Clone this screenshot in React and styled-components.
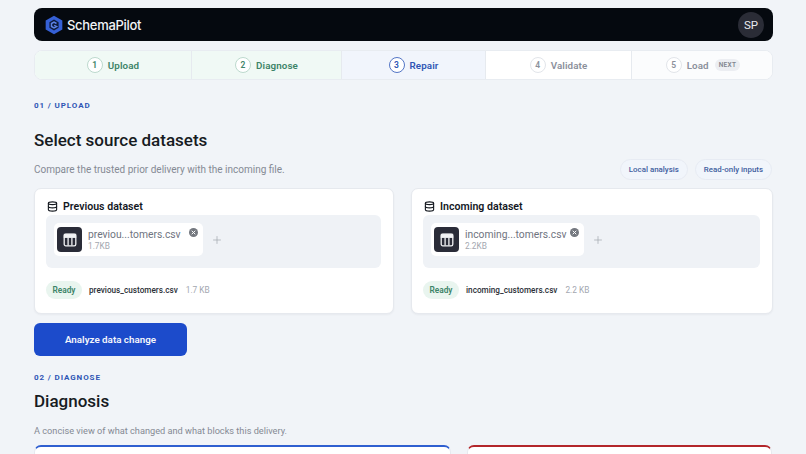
import styled, { createGlobalStyle } from 'styled-components';
import { Database, Plus } from 'lucide-react';

const GlobalStyle = createGlobalStyle`
  html, body {
    margin: 0;
    height: 454px;
    overflow: hidden;
    background: #f1f4f8;
    font-family: Roboto, "Noto Sans", sans-serif;
    color: #14181f;
  }
  * { box-sizing: border-box; }
`;

const Page = styled.div`
  width: 739px;
  margin: 0 0 0 34px;
  padding-top: 8px;
`;

const Header = styled.header`
  height: 33px;
  border-radius: 8px;
  background: #05090f;
  display: flex;
  align-items: center;
  justify-content: space-between;
  padding: 0 10px;
`;

const Brand = styled.div`
  display: flex;
  align-items: center;
  gap: 3px;
  font-family: Inter, sans-serif;
  font-weight: 500;
  font-size: 13px;
  letter-spacing: -0.3px;
  color: #f2f4f7;
`;

const Avatar = styled.div`
  width: 26px;
  height: 26px;
  margin-right: -1px;
  border-radius: 50%;
  background: #2a2c36;
  color: #e8eaee;
  font-size: 11.5px;
  display: flex;
  align-items: center;
  justify-content: center;
`;

const Stepper = styled.nav`
  margin-top: 9px;
  height: 30px;
  display: grid;
  grid-template-columns: 157px 150px 144px 146px 142px;
  border: 1px solid #e8ecf1;
  border-radius: 8px;
  overflow: hidden;
  background: #fff;
`;

const tones = {
  done: { bg: '#f0f9f5', text: '#3d8468', ring: '#bcd9cd' },
  active: { bg: '#f1f5fc', text: '#2f56b5', ring: '#5476c6' },
  idle: { bg: '#ffffff', text: '#8b909b', ring: '#e2e5ea' },
  last: { bg: '#fbfcfd', text: '#8b909b', ring: '#e2e5ea' },
};

const Step = styled.div`
  display: flex;
  align-items: center;
  justify-content: center;
  gap: 5px;
  background: ${p => tones[p.$tone].bg};
  color: ${p => tones[p.$tone].text};
  border-right: 1px solid #e6eaef;
  font-size: 9.8px;
  font-weight: 600;
  letter-spacing: 0.1px;
  &:last-child { border-right: none; }
`;

const StepNum = styled.span`
  width: 16px;
  height: 16px;
  border-radius: 50%;
  border: 1px solid ${p => tones[p.$tone].ring};
  background: #fff;
  font-size: 8.5px;
  display: flex;
  align-items: center;
  justify-content: center;
`;

const NextTag = styled.span`
  margin-left: 1px;
  padding: 2px 4px;
  border-radius: 6px;
  background: #eceef2;
  color: #80858f;
  font-size: 6.5px;
  letter-spacing: 0.3px;
`;

const Eyebrow = styled.div`
  font-size: 8px;
  line-height: 10px;
  font-weight: 700;
  letter-spacing: 0.9px;
  color: #2f56b5;
  margin-top: ${p => p.$top}px;
`;

const Title = styled.h1`
  margin: ${p => p.$top}px 0 0;
  font-size: 17px;
  line-height: 24px;
  font-weight: 500;
  color: #171b22;
`;

const SubRow = styled.div`
  margin-top: ${p => p.$top}px;
  height: 21px;
  display: flex;
  align-items: center;
  justify-content: space-between;
`;

const Sub = styled.p`
  margin: 0;
  font-size: ${p => p.$size}px;
  color: #858a94;
`;

const Chips = styled.div`
  display: flex;
  gap: 7px;
  margin-right: 1px;
`;

const Chip = styled.span`
  height: 21px;
  padding: 0 8px;
  border-radius: 11px;
  border: 1px solid #e7ebf3;
  background: #f1f5fb;
  color: #41609f;
  font-size: 7.9px;
  font-weight: 500;
  display: flex;
  align-items: center;
`;

const Cards = styled.div`
  margin-top: 8px;
  display: grid;
  grid-template-columns: 360px 362px;
  gap: 17px;
`;

const Card = styled.section`
  height: 126px;
  padding: 9px 12px 0 11px;
  background: #fff;
  border: 1px solid #e6e9ee;
  border-radius: 7px;
  box-shadow: 0 1px 2px rgba(30, 40, 60, 0.05);
`;

const CardTitle = styled.h2`
  margin: 0;
  padding-left: 1px;
  height: 17px;
  display: flex;
  align-items: center;
  gap: 5px;
  font-size: 10.6px;
  font-weight: 600;
  color: #14181f;
`;

const DropZone = styled.div`
  height: 53px;
  padding: 8px;
  background: #eff2f6;
  border-radius: 6px;
  display: flex;
  align-items: flex-start;
  gap: 8px;
`;

const FileTile = styled.div`
  position: relative;
  width: ${p => p.$width}px;
  height: 33px;
  padding: 4px 6px 4px 3px;
  background: #fff;
  border-radius: 5px;
  display: flex;
  align-items: center;
  gap: 6px;
`;

const FileIcon = styled.div`
  width: 25px;
  height: 25px;
  border-radius: 4px;
  background: #2a2c38;
  color: #f2f3f5;
  display: flex;
  align-items: center;
  justify-content: center;
`;

const FileText = styled.div`
  color: #6f7480;
  font-size: 10.3px;
  line-height: 13px;
  white-space: nowrap;
  small {
    display: block;
    font-size: 8.3px;
    line-height: 11px;
    color: #a3a7af;
  }
`;

const RemoveButton = styled.span`
  position: absolute;
  top: 5px;
  right: 5px;
  width: 9px;
  height: 9px;
  color: #74787f;
  display: flex;
`;

const AddButton = styled.span`
  align-self: center;
  margin-top: -3px;
  color: #a2a6ae;
  display: flex;
`;

const FileMeta = styled.div`
  margin-top: 13px;
  display: flex;
  align-items: center;
  gap: 7px;
`;

const ReadyBadge = styled.span`
  height: 18px;
  width: 36px;
  border-radius: 9px;
  background: #e9f5ef;
  color: #3d8468;
  font-size: 8.3px;
  font-weight: 600;
  display: flex;
  align-items: center;
  justify-content: center;
`;

const FileName = styled.span`
  font-size: 8.2px;
  font-weight: 500;
  color: #2b2f37;
`;

const FileSize = styled.span`
  margin-left: 1px;
  font-size: 8.3px;
  color: #a3a7af;
`;

const AnalyzeButton = styled.button`
  display: block;
  margin-top: 9px;
  width: 153px;
  height: 33px;
  border: none;
  border-radius: 6px;
  background: #1c4bcb;
  color: #f4f6fb;
  font-family: inherit;
  font-size: 9.8px;
  font-weight: 600;
`;

const DiagnosisGrid = styled.div`
  margin-top: 4px;
  display: grid;
  grid-template-columns: 417px 305px;
  gap: 16px;
`;

const DiagnosisCard = styled.div`
  height: 60px;
  background: #fff;
  border: 1px solid #e6e9ee;
  border-top: 2px solid ${p => p.$accent};
  border-radius: 7px;
`;

const Logo = () => (
  <svg width="20" height="20" viewBox="0 0 24 24">
    <path d="M12 1 22 6.5v11L12 23 2 17.5v-11z" fill="#3560d6" />
    <path d="M12 5.5 17.5 8.6v6.8L12 18.5l-5.5-3.1V8.6z" fill="#0c1a3c" />
    <path d="M15 10.2 12 8.5l-3 1.7v3.6l3 1.7 3-1.7-2.8-1.3" fill="none" stroke="#5d83e6" strokeWidth="1.8" />
  </svg>
);

const RemoveIcon = () => (
  <svg width="9" height="9" viewBox="0 0 12 12">
    <circle cx="6" cy="6" r="6" fill="currentColor" />
    <path d="M4 4l4 4M8 4l-4 4" stroke="#fff" strokeWidth="1.3" strokeLinecap="round" />
  </svg>
);

const TableIcon = () => (
  <svg width="14" height="14" viewBox="0 0 14 14" fill="none" stroke="currentColor">
    <rect x="1.2" y="1.2" width="11.6" height="11.6" rx="1.6" strokeWidth="1.3" />
    <rect x="1.2" y="1.2" width="11.6" height="3.4" fill="currentColor" strokeWidth="0.8" />
    <path d="M5.1 4.6v8M8.9 4.6v8" strokeWidth="1.3" />
  </svg>
);

const DatasetCard = ({ title, shortName, shortSize, fileName, size, tileWidth }) => (
  <Card>
    <CardTitle>
      <Database size={11} strokeWidth={2.4} />
      {title}
    </CardTitle>
    <DropZone>
      <FileTile $width={tileWidth}>
        <FileIcon><TableIcon /></FileIcon>
        <FileText>
          {shortName}
          <small>{shortSize}</small>
        </FileText>
        <RemoveButton><RemoveIcon /></RemoveButton>
      </FileTile>
      <AddButton><Plus size={12} strokeWidth={1.4} /></AddButton>
    </DropZone>
    <FileMeta>
      <ReadyBadge>Ready</ReadyBadge>
      <FileName>{fileName}</FileName>
      <FileSize>{size}</FileSize>
    </FileMeta>
  </Card>
);

const steps = [
  { n: 1, label: 'Upload', tone: 'done' },
  { n: 2, label: 'Diagnose', tone: 'done' },
  { n: 3, label: 'Repair', tone: 'active' },
  { n: 4, label: 'Validate', tone: 'idle' },
  { n: 5, label: 'Load', tone: 'last', next: true },
];

export default function App() {
  return (
    <Page>
      <GlobalStyle />
      <Header>
        <Brand><Logo />SchemaPilot</Brand>
        <Avatar>SP</Avatar>
      </Header>
      <Stepper>
        {steps.map(s => (
          <Step key={s.n} $tone={s.tone}>
            <StepNum $tone={s.tone}>{s.n}</StepNum>
            {s.label}
            {s.next && <NextTag>NEXT</NextTag>}
          </Step>
        ))}
      </Stepper>

      <Eyebrow $top={21}>01 / UPLOAD</Eyebrow>
      <Title $top={17}>Select source datasets</Title>
      <SubRow $top={7}>
        <Sub $size={10}>Compare the trusted prior delivery with the incoming file.</Sub>
        <Chips>
          <Chip>Local analysis</Chip>
          <Chip>Read-only inputs</Chip>
        </Chips>
      </SubRow>
      <Cards>
        <DatasetCard
          title="Previous dataset"
          shortName="previou...tomers.csv"
          shortSize="1.7KB"
          fileName="previous_customers.csv"
          size="1.7 KB"
          tileWidth={149}
        />
        <DatasetCard
          title="Incoming dataset"
          shortName="incoming...tomers.csv"
          shortSize="2.2KB"
          fileName="incoming_customers.csv"
          size="2.2 KB"
          tileWidth={153}
        />
      </Cards>
      <AnalyzeButton>Analyze data change</AnalyzeButton>

      <Eyebrow $top={17}>02 / DIAGNOSE</Eyebrow>
      <Title $top={6}>Diagnosis</Title>
      <SubRow $top={7}>
        <Sub $size={9.2}>A concise view of what changed and what blocks this delivery.</Sub>
      </SubRow>
      <DiagnosisGrid>
        <DiagnosisCard $accent="#2f5fd0" />
        <DiagnosisCard $accent="#b3262b" />
      </DiagnosisGrid>
    </Page>
  );
}
